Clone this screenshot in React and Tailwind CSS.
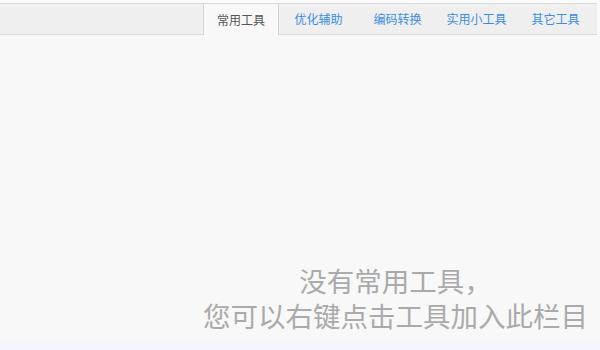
const tabs = ["优化辅助", "编码转换", "实用小工具", "其它工具"];

export default function App() {
  return (
    <div
      className="flex h-[350px] w-[600px] flex-col bg-[#fafafa] pt-[3px]"
      style={{ fontFamily: '"Noto Sans CJK SC", "Noto Sans", sans-serif' }}
    >
      <div className="mr-[3px] flex h-[32px] shrink-0 justify-end border-y border-[#dadada] bg-[#efefef] pr-[2px]">
        <div className="-mb-px flex w-[76px] items-center justify-center border-x border-[#d6d6d6] bg-[#f8f8f8] text-[12px] text-[#555]">
          常用工具
        </div>
        {tabs.map((tab) => (
          <div key={tab} className="flex w-[79px] items-center justify-center text-[12px] text-[#3b8de0]">
            {tab}
          </div>
        ))}
      </div>

      <div className="flex flex-1 flex-col items-end justify-end bg-[#f8f8f8] pb-[9px] pr-[12px]">
        <div className="flex flex-col items-center gap-[7px] font-['Liberation_Sans','Noto_Sans_CJK_SC',sans-serif] text-[27.5px] leading-[28px] text-[#aaaaaa]">
          <div>没有常用工具，</div>
          <div>您可以右键点击工具加入此栏目</div>
        </div>
      </div>
      <div className="h-[9px] shrink-0 bg-[#f3f7fb]" />
    </div>
  );
}
